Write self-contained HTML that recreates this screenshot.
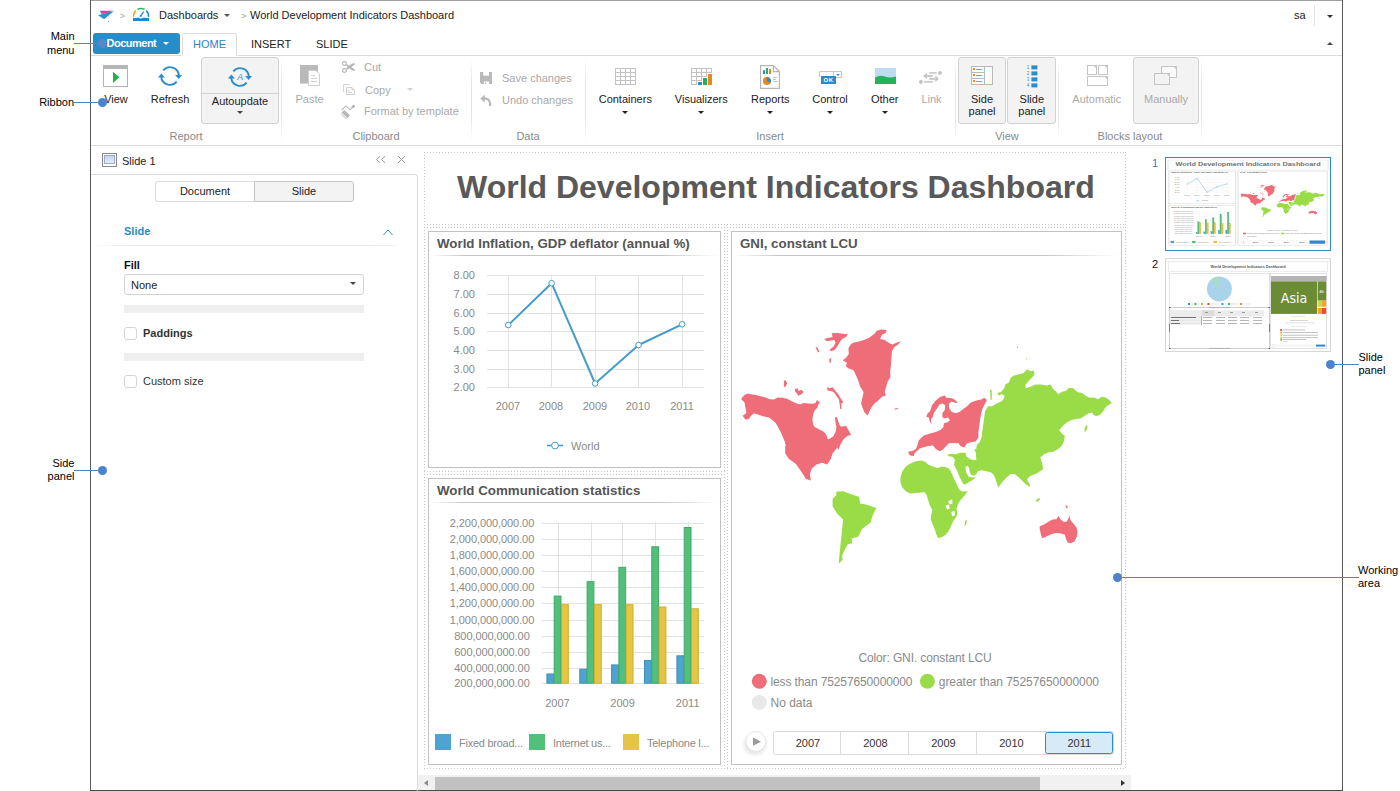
<!DOCTYPE html>
<html><head><meta charset="utf-8"><title>Dashboard</title>
<style>
html,body{margin:0;padding:0;background:#fff;}
body{width:1400px;height:791px;position:relative;overflow:hidden;font-family:"Liberation Sans",Arial,sans-serif;font-size:11px;color:#222;}
.a{position:absolute;white-space:nowrap;}
.c{position:absolute;white-space:nowrap;transform:translateX(-50%);text-align:center;}
.dis{color:#a9a9a9;}
.grp{color:#8a8a8a;}
.sep{position:absolute;width:1px;top:58px;height:84px;background:linear-gradient(#fff,#e4e4e4 30%,#e4e4e4 70%,#fff);}
.btn{position:absolute;background:#f3f3f3;border:1px solid #d2d2d2;border-radius:3px;box-sizing:border-box;}
.arr{position:absolute;width:0;height:0;border-left:3px solid transparent;border-right:3px solid transparent;border-top:3px solid #333;}
.call{position:absolute;font-size:11px;color:#000;line-height:13px;}
.dot{position:absolute;width:9px;height:9px;border-radius:4.5px;background:#4a84cc;}
.ln{position:absolute;height:1px;background:#4a84cc;}
.blk{position:absolute;border:1px solid #c2c2c2;box-sizing:border-box;background:#fff;}
.dots{position:absolute;box-sizing:border-box;background:repeating-linear-gradient(90deg,#c6c6c6 0 1px,transparent 1px 3px) left top/100% 1px no-repeat,repeating-linear-gradient(90deg,#c6c6c6 0 1px,transparent 1px 3px) left bottom/100% 1px no-repeat,repeating-linear-gradient(180deg,#c6c6c6 0 1px,transparent 1px 3px) left top/1px 100% no-repeat,repeating-linear-gradient(180deg,#c6c6c6 0 1px,transparent 1px 3px) right top/1px 100% no-repeat;}
.bt{position:absolute;left:8px;top:4px;font-weight:bold;font-size:13.33px;color:#555;white-space:nowrap;line-height:16px}
.bl{position:absolute;left:2px;right:2px;top:23px;height:1px;background:linear-gradient(90deg,#fff,#c4c4c4 12%,#c4c4c4 80%,#fff);}
.tah{font-family:"DejaVu Sans Condensed","DejaVu Sans",sans-serif;}
</style></head><body>
<!-- FRAME -->
<div class="a" style="left:90px;top:0;width:1253px;height:1px;background:#a0a0a0"></div>
<div class="a" style="left:90px;top:0;width:1px;height:791px;background:#5a5a5a"></div>
<div class="a" style="left:1342px;top:0;width:1px;height:791px;background:#5a5a5a"></div>
<div class="a" style="left:90px;top:790px;width:1253px;height:1px;background:#4a4a4a"></div>
<!--TOP-->
<!-- breadcrumb -->
<svg class="a" style="left:96px;top:8px" width="20" height="16" viewBox="96 8 20 16">
<polygon points="99.8,10.8 112.5,10.8 108,13.2 101.6,13.9" fill="#e8399b"/>
<polygon points="98,15.2 114,10.9 104.1,19.2" fill="#2b8fd0"/>
<rect x="107.9" y="20.9" width="1" height="1" fill="#58a7dc"/>
</svg>
<div class="a" style="left:119.7px;top:11px;color:#a2a2a2;font-size:9px">&gt;</div>
<svg class="a" style="left:131px;top:6px" width="20" height="17" viewBox="131 6 20 17">
<path d="M133.6 16.8 A7.5 7.5 0 0 1 135.9 10.6" fill="none" stroke="#f0a62c" stroke-width="1.5"/>
<path d="M137.4 9.4 A7.5 7.5 0 0 1 144.7 9.4" fill="none" stroke="#2fb457" stroke-width="1.5"/>
<path d="M146.2 10.6 A7.5 7.5 0 0 1 148.5 16.8" fill="none" stroke="#2485c8" stroke-width="1.5"/>
<path d="M143.7 11.6 L140.7 16" stroke="#2485c8" stroke-width="1.3" fill="none"/><circle cx="140.6" cy="16.1" r="1" fill="#2485c8"/>
<path d="M133 18.1 L136.4 18.1 Q137.7 16.9 139 18.1 L141 18.6 L142.8 18.1 Q144.1 16.9 145.4 18.1 L149.1 18.1 L149.1 20.9 L133 20.9 Z" fill="#2485c8"/>
</svg>
<div class="a" style="left:159px;top:9px;">Dashboards</div>
<div class="arr" style="left:224px;top:14px;border-top-color:#555"></div>
<div class="a" style="left:241px;top:11px;color:#a2a2a2;font-size:9px">&gt;</div>
<div class="a" style="left:250px;top:9px;">World Development Indicators Dashboard</div>
<div class="a" style="left:1294px;top:9px;">sa</div>
<div class="a" style="left:1314px;top:5px;width:1px;height:21px;background:#e3e3e3"></div>
<div class="arr" style="left:1327px;top:15px;"></div>
<div class="arr" style="left:1327px;top:42px;border-top:none;border-bottom:3px solid #444"></div>
<!-- tabs -->
<div class="a" style="left:91px;top:55px;width:1251px;height:1px;background:#dcdcdc"></div>
<div class="a" style="left:93px;top:33px;width:87px;height:21px;background:#268cca;border-radius:3px;"></div>
<div class="a" style="left:106.5px;top:37px;color:#fff;font-weight:bold;letter-spacing:-0.5px">Document</div>
<div class="arr" style="left:163px;top:42px;border-top-color:#fff"></div>
<div class="a" style="left:182px;top:33px;width:55px;height:23px;box-sizing:border-box;border:1px solid #dcdcdc;border-bottom:1px solid #fff;background:#fff;border-radius:2px 2px 0 0"></div>
<div class="a" style="left:193px;top:38px;color:#2a84c6;">HOME</div>
<div class="a" style="left:251px;top:38px;">INSERT</div>
<div class="a" style="left:316px;top:38px;">SLIDE</div>
<!--/TOP-->
<!--RIBBON-->
<div class="a" style="left:91px;top:145px;width:1251px;height:1px;background:#dcdcdc"></div>
<div class="sep" style="left:281px"></div>
<div class="sep" style="left:471px"></div>
<div class="sep" style="left:585px"></div>
<div class="sep" style="left:955px"></div>
<div class="sep" style="left:1058px"></div>
<div class="sep" style="left:1201px"></div>
<div class="c grp" style="left:186px;top:130px">Report</div>
<div class="c grp" style="left:376px;top:130px">Clipboard</div>
<div class="c grp" style="left:528px;top:130px">Data</div>
<div class="c grp" style="left:770px;top:130px">Insert</div>
<div class="c grp" style="left:1007px;top:130px">View</div>
<div class="c grp" style="left:1130px;top:130px">Blocks layout</div>
<svg class="a" style="left:103px;top:65px" width="25" height="22" viewBox="0 0 25 22">
<rect x="0.5" y="0.5" width="24" height="21" fill="#fff" stroke="#b4b4b4"/><rect x="0" y="0" width="25" height="4" fill="#b6b6b6"/>
<polygon points="10,6.7 16.4,12.3 10,18" fill="#22b14c"/></svg>
<div class="c " style="left:116px;top:93px">View</div>
<svg class="a" style="left:157px;top:65px" width="26" height="22" viewBox="0 0 26 22"><path d="M6.3 5.3 A8.8 8.8 0 0 1 21.8 10.6" fill="none" stroke="#2b8ccd" stroke-width="1.9"/>
<path d="M19.7 16.7 A8.8 8.8 0 0 1 4.2 11.4" fill="none" stroke="#2b8ccd" stroke-width="1.9"/>
<polygon points="18.1,10.1 25,10.1 21.7,14.1" fill="#2b8ccd"/>
<polygon points="0.9,12.6 7.9,12.6 4.4,8.6" fill="#2b8ccd"/></svg>
<div class="c " style="left:170px;top:93px">Refresh</div>
<div class="btn" style="left:201px;top:57px;width:78px;height:67px"></div>
<div class="a" style="left:202px;top:93px;width:76px;height:1px;background:#d2d2d2"></div>
<svg class="a" style="left:227px;top:66px" width="26" height="22" viewBox="0 0 26 22"><path d="M6.3 5.3 A8.8 8.8 0 0 1 21.8 10.6" fill="none" stroke="#2b8ccd" stroke-width="1.9"/>
<path d="M19.7 16.7 A8.8 8.8 0 0 1 4.2 11.4" fill="none" stroke="#2b8ccd" stroke-width="1.9"/>
<polygon points="18.1,10.1 25,10.1 21.7,14.1" fill="#2b8ccd"/>
<polygon points="0.9,12.6 7.9,12.6 4.4,8.6" fill="#2b8ccd"/><text x="13.2" y="13.6" font-size="8.6" font-style="italic" font-family="Liberation Sans,sans-serif" fill="#2b8ccd" text-anchor="middle">A</text></svg>
<div class="c " style="left:240px;top:95px">Autoupdate</div>
<div class="arr" style="left:237px;top:111px;border-top-color:#444"></div>
<svg class="a" style="left:300px;top:65px" width="21" height="22" viewBox="0 0 21 22">
<rect x="0" y="0" width="18" height="18.6" fill="#b9b9b9"/>
<path d="M8.5 5.5 L16 5.5 L19.5 9 L19.5 20.5 L8.5 20.5 Z" fill="#fff" stroke="#d0d0d0"/>
<path d="M11 10.5h4M11 13.5h6M11 16.5h6" stroke="#d0d0d0" stroke-width="1"/></svg>
<div class="c dis" style="left:309.5px;top:93px">Paste</div>
<svg class="a" style="left:341px;top:61px" width="15" height="13" viewBox="0 0 15 13">
<circle cx="3.5" cy="2.5" r="1.9" fill="none" stroke="#b4b4b4" stroke-width="1.1"/>
<circle cx="3.5" cy="9.5" r="1.9" fill="none" stroke="#b4b4b4" stroke-width="1.1"/>
<polygon points="5,7.4 6,8.7 13.9,3.6 13.4,1.9 10.8,2.8" fill="#b4b4b4"/><polygon points="5,4.6 6,3.3 13.9,8.4 13.4,10.1 10.8,9.2" fill="#b4b4b4"/></svg>
<div class="a dis" style="left:364px;top:61px">Cut</div>
<svg class="a" style="left:343px;top:84px" width="13" height="12" viewBox="0 0 13 12">
<path d="M1.7 7.6 H0.6 V0.6 H6.9" fill="none" stroke="#d2d2d2" stroke-width="1"/>
<path d="M3.6 3.6 H9 L11.4 6 V10.4 H3.6 Z" fill="#fff" stroke="#cdcdcd" stroke-width="1"/><path d="M9 3.6 V6 H11.4" fill="none" stroke="#cdcdcd" stroke-width="0.8"/>
<path d="M5.2 6.5h1.6M5.2 8.5h4" stroke="#cdcdcd"/></svg>
<div class="a dis" style="left:365px;top:84px">Copy</div>
<div class="arr" style="left:407px;top:88px;border-top-color:#d0d0d0"></div>
<svg class="a" style="left:341px;top:104px" width="15" height="16" viewBox="0 0 15 16">
<polygon points="10.4,2.8 12.6,0.6 14.2,2.2 12,4.4" fill="#b0b0b0"/>
<path d="M11.3 3.5 L8.9 5.8 L4.9 1.9 L0.8 6" stroke="#bdbdbd" stroke-width="1.1" fill="none"/>
<polygon points="3.3,5.9 8.9,11.3 6.5,14.2 0.7,8.6" fill="#b8b8b8"/>
<polygon points="0.7,8.6 6.5,14.2 4.6,15.6 -0.1,10.6" fill="#dedede"/></svg>
<div class="a dis" style="left:364px;top:105px">Format by template</div>
<svg class="a" style="left:480px;top:72px" width="12" height="12" viewBox="0 0 12 12">
<path d="M0 0 H12 V12 H1.5 L0 10.5 Z" fill="#b9b9b9"/><rect x="3.2" y="0" width="5.8" height="3.7" fill="#fff"/><rect x="4" y="9.4" width="5" height="2.6" fill="#fff"/><rect x="5" y="10.2" width="1.2" height="1.8" fill="#b9b9b9"/></svg>
<div class="a dis" style="left:502px;top:72px">Save changes</div>
<svg class="a" style="left:480px;top:95px" width="12" height="12" viewBox="0 0 12 12">
<polygon points="0.2,3.6 4.8,-0.4 4.8,7.6" fill="#b9b9b9"/><path d="M4 3.6 H6 Q10.2 4.2 10.2 11" fill="none" stroke="#b9b9b9" stroke-width="2.1"/></svg>
<div class="a dis" style="left:502px;top:94px">Undo changes</div>
<svg class="a" style="left:615px;top:68px" width="21" height="17" viewBox="0 0 21 17"><rect x="0.5" y="0.5" width="20" height="16" fill="#fff" stroke="#c2c2c2"/><path d="M5.5 0V17M10.5 0V17M15.5 0V17M0 4.5H21M0 8.5H21M0 12.5H21" stroke="#c2c2c2" fill="none"/></svg>
<div class="c " style="left:625.3px;top:93px">Containers</div>
<div class="arr" style="left:622px;top:111px;border-top-color:#222"></div>
<svg class="a" style="left:691px;top:68px" width="22" height="17" viewBox="0 0 22 17"><rect x="0.5" y="0.5" width="20" height="16" fill="#fff" stroke="#c2c2c2"/><path d="M5.5 0V17M10.5 0V17M15.5 0V17M0 4.5H21M0 8.5H21M0 12.5H21" stroke="#c2c2c2" fill="none"/><rect x="6" y="13" width="16" height="4" fill="#fff"/><rect x="11" y="9" width="11" height="8" fill="#fff"/><rect x="16" y="5" width="6" height="12" fill="#fff"/><rect x="7" y="14" width="4" height="3" fill="#2b8ccd"/><rect x="12" y="10" width="4" height="7" fill="#27ae60"/><rect x="17" y="6" width="4" height="11" fill="#e8891c"/></svg>
<div class="c " style="left:701.3px;top:93px">Visualizers</div>
<div class="arr" style="left:698px;top:111px;border-top-color:#222"></div>
<svg class="a" style="left:760px;top:64px" width="20" height="25" viewBox="0 0 20 25">
<path d="M0.6 1.6 H13.4 L19.4 7.6 V24.4 H0.6 Z" fill="#fff" stroke="#b6b6b6" stroke-width="1.2"/><path d="M13.4 1.6 V7.6 H19.4" fill="none" stroke="#b6b6b6" stroke-width="1.2"/>
<rect x="3" y="6.2" width="2" height="3.8" fill="#2b8ccd"/><rect x="6" y="4" width="2" height="6" fill="#27ae60"/><rect x="9" y="5" width="2" height="5" fill="#e8891c"/>
<circle cx="6.9" cy="16.9" r="4" fill="#e8891c"/><path d="M6.9 16.9 L6.9 12.9 A4 4 0 0 1 10.4 18.9 Z" fill="#2b8ccd"/>
<path d="M13 13.5h4M13 15.5h3M13 17.5h4.6" stroke="#c4c4c4"/></svg>
<div class="c " style="left:770.3px;top:93px">Reports</div>
<div class="arr" style="left:767px;top:111px;border-top-color:#222"></div>
<svg class="a" style="left:818px;top:70px" width="25" height="15" viewBox="0 0 25 15">
<path d="M1.5 7 V1.5 H23.5 V7.5 H17" fill="#fff" stroke="#c6c6c6"/><path d="M15.5 1.5 V7.5" stroke="#c6c6c6"/>
<polygon points="18.2,4 21.8,4 20,5.9" fill="#2b8ccd"/>
<rect x="3" y="6" width="15" height="8" fill="#2b8ccd"/>
<text x="10.5" y="12.4" font-size="6" font-weight="bold" font-family="Liberation Sans,sans-serif" fill="#fff" text-anchor="middle" letter-spacing="0.4">OK</text></svg>
<div class="c " style="left:830px;top:93px">Control</div>
<div class="arr" style="left:827px;top:111px;border-top-color:#222"></div>
<svg class="a" style="left:875px;top:68px" width="21" height="16" viewBox="0 0 21 16">
<rect width="21" height="16" fill="#bcdcf2"/><path d="M0 9.6 Q5 6.6 10 8.6 T21 8.4 V16 H0 Z" fill="#25b35a"/></svg>
<div class="c " style="left:884.7px;top:93px">Other</div>
<div class="arr" style="left:882px;top:111px;border-top-color:#222"></div>
<svg class="a" style="left:918px;top:70px" width="26" height="15" viewBox="918 70 26 15">
<g fill="#c2c2c2" stroke="none"><circle cx="940" cy="72.9" r="1.9"/><circle cx="920.9" cy="81.9" r="1.9"/>
<rect x="929.3" y="72.2" width="7.4" height="1.5"/><rect x="924.1" y="81.1" width="8.7" height="1.5"/>
<polygon points="923.2,76 926.9,72.8 926.9,79"/><rect x="926.8" y="75.1" width="6" height="1.8"/>
<polygon points="938.9,78.8 935.3,75.6 935.3,82"/><rect x="929.3" y="77.9" width="6.1" height="1.8"/></g></svg>
<div class="c dis" style="left:931.5px;top:93px">Link</div>
<div class="btn" style="left:958px;top:57px;width:48px;height:67px"></div>
<svg class="a" style="left:971px;top:66px" width="22" height="19" viewBox="0 0 22 19">
<rect x="0.5" y="0.5" width="21" height="18" fill="#fff" stroke="#b9b9b9"/><path d="M13.5 0V19M0 6.5H13.5M0 12.5H13.5" stroke="#b9b9b9" fill="none"/>
<rect x="2" y="2" width="2" height="2" fill="#e8891c"/><rect x="5" y="3" width="6" height="1" fill="#e8891c"/>
<rect x="2" y="8" width="2" height="2" fill="#e8891c"/><rect x="5" y="9" width="6" height="1" fill="#e8891c"/>
<rect x="2" y="14" width="2" height="2" fill="#e8891c"/><rect x="5" y="15" width="6" height="1" fill="#e8891c"/></svg>
<div class="c" style="left:982px;top:93px;line-height:12px">Side<br>panel</div>
<div class="btn" style="left:1007px;top:57px;width:49px;height:67px"></div>
<svg class="a" style="left:1026px;top:65px" width="12" height="23" viewBox="0 0 12 23"><rect x="5.4" y="0.4" width="6" height="4" fill="#2b8ccd"/><text x="2" y="4.0" font-size="4.5" font-family="Liberation Sans,sans-serif" fill="#2b8ccd" text-anchor="middle">1</text><rect x="5.4" y="6.4" width="6" height="4" fill="#2b8ccd"/><text x="2" y="10.0" font-size="4.5" font-family="Liberation Sans,sans-serif" fill="#2b8ccd" text-anchor="middle">2</text><rect x="5.4" y="12.4" width="6" height="4" fill="#2b8ccd"/><text x="2" y="16.0" font-size="4.5" font-family="Liberation Sans,sans-serif" fill="#2b8ccd" text-anchor="middle">3</text><rect x="5.4" y="18.4" width="6" height="4" fill="#2b8ccd"/><text x="2" y="22.0" font-size="4.5" font-family="Liberation Sans,sans-serif" fill="#2b8ccd" text-anchor="middle">4</text></svg>
<div class="c" style="left:1031.8px;top:93px;line-height:12px">Slide<br>panel</div>
<svg class="a" style="left:1087px;top:65px" width="22" height="21" viewBox="0 0 22 21">
<rect x="0.5" y="0.5" width="9" height="9" fill="#fff" stroke="#c4c4c4"/><rect x="11.5" y="0.5" width="9" height="9" fill="#fff" stroke="#c4c4c4"/><rect x="0.5" y="11.5" width="20" height="9" fill="#fff" stroke="#c4c4c4"/>
<polygon points="6.5,0.5 9.5,0.5 9.5,3.5" fill="#c4c4c4"/><polygon points="17.5,0.5 20.5,0.5 20.5,3.5" fill="#c4c4c4"/><polygon points="17.5,11.5 20.5,11.5 20.5,14.5" fill="#c4c4c4"/></svg>
<div class="c dis" style="left:1096.8px;top:93px">Automatic</div>
<div class="btn" style="left:1133px;top:57px;width:66px;height:67px"></div>
<svg class="a" style="left:1154px;top:66px" width="24" height="20" viewBox="0 0 24 20">
<path d="M7.5 7 V0.5 H22.5 V11.5 H16" fill="#fafafa" stroke="#c4c4c4"/><polygon points="19.5,0.5 22.5,0.5 22.5,3.5" fill="#c4c4c4"/>
<rect x="0.5" y="7.5" width="15" height="11" fill="#f3f3f3" stroke="#c4c4c4"/><polygon points="12.5,7.5 15.5,7.5 15.5,10.5" fill="#c4c4c4"/></svg>
<div class="c dis" style="left:1166px;top:93px">Manually</div>
<!--/RIBBON-->
<!--SIDE-->
<svg class="a" style="left:102px;top:153px" width="15" height="14" viewBox="0 0 15 14"><defs><linearGradient id="sg" x1="0" y1="0" x2="0" y2="1"><stop offset="0" stop-color="#c3d2ee"/><stop offset="1" stop-color="#e6edf9"/></linearGradient></defs>
<rect x="0.5" y="0.5" width="14" height="13" fill="#fff" stroke="#888"/><rect x="2.5" y="2.5" width="10" height="8" fill="url(#sg)" stroke="#93a3c2" stroke-width="0.9"/></svg>
<div class="a" style="left:122px;top:155px">Slide 1</div>
<svg class="a" style="left:376px;top:156px" width="30" height="8" viewBox="0 0 30 8"><path d="M4 0.2L0.5 3.5L4 6.8M9 0.2L5.5 3.5L9 6.8" fill="none" stroke="#8e8e8e" stroke-width="0.9"/><path d="M22 0L29 7M29 0L22 7" stroke="#8e8e8e" stroke-width="0.9"/></svg>
<div class="a" style="left:91px;top:174px;width:327px;height:700px;box-sizing:border-box;border-top:1px solid #dcdcdc;border-right:1px solid #dcdcdc;border-top-right-radius:4px"></div>
<div class="a" style="left:155px;top:181px;width:100px;height:21px;box-sizing:border-box;border:1px solid #dadada;border-right:none;border-radius:3px 0 0 3px;background:#fff"></div>
<div class="a" style="left:254px;top:181px;width:100px;height:21px;box-sizing:border-box;border:1px solid #c6c6c6;border-radius:0 3px 3px 0;background:#f3f3f3"></div>
<div class="c" style="left:205px;top:185px">Document</div><div class="c" style="left:304px;top:185px">Slide</div>
<div class="a" style="left:124px;top:225px;color:#2a8acb;font-weight:bold">Slide</div>
<svg class="a" style="left:383px;top:229px" width="10" height="7" viewBox="0 0 10 7"><path d="M0.5 6L5 1L9.5 6" fill="none" stroke="#2a8acb" stroke-width="1"/></svg>
<div class="a" style="left:91px;top:245px;width:306px;height:1px;background:linear-gradient(90deg,#fff,#e6e6e6 15%,#e6e6e6 90%,#f4f4f4)"></div>
<div class="a" style="left:124px;top:259px;font-weight:bold;color:#111">Fill</div>
<div class="a" style="left:124px;top:274px;width:240px;height:21px;box-sizing:border-box;border:1px solid #d2d2d2;border-radius:3px;background:#fff"></div>
<div class="a" style="left:131px;top:279px">None</div>
<div class="arr" style="left:350px;top:282px;border-top-color:#444"></div>
<div class="a" style="left:124px;top:305px;width:240px;height:8px;background:#efefef"></div>
<div class="a" style="left:124px;top:327px;width:13px;height:13px;box-sizing:border-box;border:1px solid #d5d5d5;border-radius:3px;background:#fff"></div>
<div class="a" style="left:143px;top:327px;font-weight:bold;color:#333">Paddings</div>
<div class="a" style="left:124px;top:353px;width:240px;height:8px;background:#efefef"></div>
<div class="a" style="left:124px;top:375px;width:13px;height:13px;box-sizing:border-box;border:1px solid #d5d5d5;border-radius:3px;background:#fff"></div>
<div class="a" style="left:143px;top:375px;color:#333">Custom size</div>
<!--/SIDE-->
<!--WORK-->
<div class="dots" style="left:424px;top:152px;width:702px;height:73px"></div>
<div class="dots" style="left:424px;top:227px;width:301px;height:245px"></div>
<div class="dots" style="left:424px;top:474px;width:301px;height:295px"></div>
<div class="dots" style="left:727px;top:227px;width:399px;height:542px"></div>
<div class="a" style="left:457px;top:169px;font-size:32px;font-weight:bold;color:#595959;line-height:37px">World Development Indicators Dashboard</div>
<div class="blk" style="left:428px;top:231px;width:293px;height:237px"><div class="bt">World Inflation, GDP deflator (annual %)</div><div class="bl"></div></div>
<div class="blk" style="left:428px;top:478px;width:293px;height:287px"><div class="bt">World Communication statistics</div><div class="bl"></div></div>
<div class="blk" style="left:731px;top:231px;width:391px;height:534px"><div class="bt">GNI, constant LCU</div><div class="bl"></div></div>
<svg class="a" style="left:0;top:0" width="1400" height="791" viewBox="0 0 1400 791" font-family="Liberation Sans,sans-serif" font-size="11" fill="#8a8a8a">
<path d="M487 275.5H704" stroke="#e2e2e2"/><text x="475" y="279.0" text-anchor="end">8.00</text>
<path d="M487 294.5H704" stroke="#e2e2e2"/><text x="475" y="298.0" text-anchor="end">7.00</text>
<path d="M487 313.5H704" stroke="#e2e2e2"/><text x="475" y="317.0" text-anchor="end">6.00</text>
<path d="M487 331.5H704" stroke="#e2e2e2"/><text x="475" y="335.0" text-anchor="end">5.00</text>
<path d="M487 350.5H704" stroke="#e2e2e2"/><text x="475" y="354.0" text-anchor="end">4.00</text>
<path d="M487 369.5H704" stroke="#e2e2e2"/><text x="475" y="373.0" text-anchor="end">3.00</text>
<path d="M487 387.5H704" stroke="#e2e2e2"/><text x="475" y="391.0" text-anchor="end">2.00</text>
<path d="M508.5 276V387" stroke="#e2e2e2"/><text x="508.0" y="410" text-anchor="middle">2007</text>
<path d="M551.5 276V387" stroke="#e2e2e2"/><text x="551.0" y="410" text-anchor="middle">2008</text>
<path d="M595.5 276V387" stroke="#e2e2e2"/><text x="595.0" y="410" text-anchor="middle">2009</text>
<path d="M638.5 276V387" stroke="#e2e2e2"/><text x="638.0" y="410" text-anchor="middle">2010</text>
<path d="M682.5 276V387" stroke="#e2e2e2"/><text x="682.0" y="410" text-anchor="middle">2011</text>
<polyline points="508.3,325 551.6,283.2 595.1,383.5 638.6,345 682.1,324.3" fill="none" stroke="#459ccb" stroke-width="2" stroke-linejoin="round"/>
<circle cx="508.3" cy="325" r="2.8" fill="#fff" stroke="#459ccb" stroke-width="1"/>
<circle cx="551.6" cy="283.2" r="2.8" fill="#fff" stroke="#459ccb" stroke-width="1"/>
<circle cx="595.1" cy="383.5" r="2.8" fill="#fff" stroke="#459ccb" stroke-width="1"/>
<circle cx="638.6" cy="345" r="2.8" fill="#fff" stroke="#459ccb" stroke-width="1"/>
<circle cx="682.1" cy="324.3" r="2.8" fill="#fff" stroke="#459ccb" stroke-width="1"/>
<path d="M547 445.5H563" stroke="#459ccb" stroke-width="1.6"/><circle cx="555" cy="445.5" r="3.4" fill="#fff" stroke="#459ccb" stroke-width="1"/><text x="571" y="450">World</text>
<path d="M542 523.5H704" stroke="#e2e2e2"/><text x="492" y="526.5" text-anchor="middle" letter-spacing="-0.08">2,200,000,000.00</text>
<path d="M542 539.5H704" stroke="#e2e2e2"/><text x="492" y="542.5" text-anchor="middle" letter-spacing="-0.08">2,000,000,000.00</text>
<path d="M542 555.5H704" stroke="#e2e2e2"/><text x="492" y="558.5" text-anchor="middle" letter-spacing="-0.08">1,800,000,000.00</text>
<path d="M542 571.5H704" stroke="#e2e2e2"/><text x="492" y="574.5" text-anchor="middle" letter-spacing="-0.08">1,600,000,000.00</text>
<path d="M542 587.5H704" stroke="#e2e2e2"/><text x="492" y="590.5" text-anchor="middle" letter-spacing="-0.08">1,400,000,000.00</text>
<path d="M542 603.5H704" stroke="#e2e2e2"/><text x="492" y="606.5" text-anchor="middle" letter-spacing="-0.08">1,200,000,000.00</text>
<path d="M542 620.5H704" stroke="#e2e2e2"/><text x="492" y="623.5" text-anchor="middle" letter-spacing="-0.08">1,000,000,000.00</text>
<path d="M542 636.5H704" stroke="#e2e2e2"/><text x="492" y="639.5" text-anchor="middle" letter-spacing="-0.08">800,000,000.00</text>
<path d="M542 652.5H704" stroke="#e2e2e2"/><text x="492" y="655.5" text-anchor="middle" letter-spacing="-0.08">600,000,000.00</text>
<path d="M542 668.5H704" stroke="#e2e2e2"/><text x="492" y="671.5" text-anchor="middle" letter-spacing="-0.08">400,000,000.00</text>
<path d="M542 683.5H704" stroke="#e2e2e2"/><text x="492" y="686.5" text-anchor="middle" letter-spacing="-0.08">200,000,000.00</text>
<path d="M558.5 522V683" stroke="#e2e2e2"/>
<path d="M591.5 522V683" stroke="#e2e2e2"/>
<path d="M622.5 522V683" stroke="#e2e2e2"/>
<path d="M655.5 522V683" stroke="#e2e2e2"/>
<path d="M688.5 522V683" stroke="#e2e2e2"/>
<rect x="546.9" y="674.0" width="6.8" height="9.2" fill="#4fa3d1" stroke="#3f8fbd" stroke-width="1"/>
<rect x="554.2" y="596.1" width="6.8" height="87.1" fill="#52c07a" stroke="#41a866" stroke-width="1"/>
<rect x="561.5" y="604.7" width="6.8" height="78.5" fill="#e6c545" stroke="#d0ab2c" stroke-width="1"/>
<rect x="579.8" y="669.2" width="6.8" height="14.0" fill="#4fa3d1" stroke="#3f8fbd" stroke-width="1"/>
<rect x="587.1" y="581.7" width="6.8" height="101.5" fill="#52c07a" stroke="#41a866" stroke-width="1"/>
<rect x="594.4" y="604.7" width="6.8" height="78.5" fill="#e6c545" stroke="#d0ab2c" stroke-width="1"/>
<rect x="611.6" y="664.9" width="6.8" height="18.3" fill="#4fa3d1" stroke="#3f8fbd" stroke-width="1"/>
<rect x="618.9" y="567.3" width="6.8" height="115.9" fill="#52c07a" stroke="#41a866" stroke-width="1"/>
<rect x="626.2" y="604.7" width="6.8" height="78.5" fill="#e6c545" stroke="#d0ab2c" stroke-width="1"/>
<rect x="644.5" y="660.4" width="6.8" height="22.8" fill="#4fa3d1" stroke="#3f8fbd" stroke-width="1"/>
<rect x="651.8" y="546.8" width="6.8" height="136.4" fill="#52c07a" stroke="#41a866" stroke-width="1"/>
<rect x="659.1" y="607.0" width="6.8" height="76.2" fill="#e6c545" stroke="#d0ab2c" stroke-width="1"/>
<rect x="676.9" y="655.8" width="6.8" height="27.4" fill="#4fa3d1" stroke="#3f8fbd" stroke-width="1"/>
<rect x="684.2" y="527.5" width="6.8" height="155.7" fill="#52c07a" stroke="#41a866" stroke-width="1"/>
<rect x="691.5" y="608.8" width="6.8" height="74.4" fill="#e6c545" stroke="#d0ab2c" stroke-width="1"/>
<text x="557.5" y="707" text-anchor="middle">2007</text>
<text x="622.6" y="707" text-anchor="middle">2009</text>
<text x="687.7" y="707" text-anchor="middle">2011</text>
<rect x="435" y="734" width="16" height="16" fill="#4fa3d1"/><text x="459" y="747" letter-spacing="-0.25">Fixed broad...</text>
<rect x="529" y="734" width="16" height="16" fill="#52c07a"/><text x="553" y="747" letter-spacing="-0.25">Internet us...</text>
<rect x="623" y="734" width="16" height="16" fill="#e6c545"/><text x="647" y="747" letter-spacing="-0.25">Telephone l...</text>
<g font-size="12"><text x="925" y="662" text-anchor="middle" letter-spacing="-0.12">Color: GNI. constant LCU</text>
<circle cx="759.3" cy="681.3" r="7.5" fill="#ef6d78"/><text x="770.5" y="686" letter-spacing="-0.12">less than 75257650000000</text>
<circle cx="927.4" cy="681.3" r="7.5" fill="#9adb48"/><text x="938.8" y="686" letter-spacing="-0.05">greater than 75257650000000</text>
<circle cx="759.3" cy="702.5" r="7.5" fill="#e8e8e8"/><text x="770.5" y="707">No data</text>
</g>
<defs><radialGradient id="psh"><stop offset="0.55" stop-color="#000" stop-opacity="0.10"/><stop offset="1" stop-color="#000" stop-opacity="0"/></radialGradient></defs><ellipse cx="755" cy="744.5" rx="14" ry="13" fill="url(#psh)"/><circle cx="755.9" cy="741.5" r="10" fill="#fff" stroke="#e6e6e6"/><polygon points="753,737.6 761,741.7 753,745.8" fill="#9a9a9a"/>
<rect x="773.5" y="731.5" width="340" height="23" rx="2" fill="#fff" stroke="#dadada"/>
<path d="M840.5 732V754" stroke="#dadada"/>
<path d="M908.5 732V754" stroke="#dadada"/>
<path d="M976.5 732V754" stroke="#dadada"/>
<rect x="1045.5" y="732.5" width="67" height="21" rx="2" fill="#d6eaf8" stroke="#2b8ccd"/>
<text x="807.9" y="747" text-anchor="middle" font-size="11" fill="#333">2007</text>
<text x="875.5" y="747" text-anchor="middle" font-size="11" fill="#333">2008</text>
<text x="943.5" y="747" text-anchor="middle" font-size="11" fill="#333">2009</text>
<text x="1011.5" y="747" text-anchor="middle" font-size="11" fill="#333">2010</text>
<text x="1079.3" y="747" text-anchor="middle" font-size="11" fill="#333">2011</text>
</svg>
<svg class="a" style="left:0;top:0" width="1400" height="791" viewBox="0 0 1400 791"><path d="M741.6,398.1 744.5,394.9 747.9,393.6 751.1,394.3 755.9,394.9 760.6,396.2 765.3,397.4 770.1,399.3 773.9,399.6 777.7,397.4 782.4,397.7 787.1,398.7 791.9,401.2 796.6,403.4 800.4,404.4 803.3,403.0 808.0,403.4 812.7,403.8 815.6,403.0 816.9,400.0 818.4,401.2 819.9,402.5 818.0,405.3 817.5,407.6 814.6,410.6 813.1,414.8 812.4,419.5 813.1,424.3 814.6,427.1 818.4,429.0 822.6,430.9 825.6,433.8 827.0,436.6 827.9,439.5 830.8,437.9 833.6,436.0 835.5,431.9 836.4,427.1 835.5,422.4 834.9,417.6 837.0,417.1 838.3,421.4 840.2,426.2 843.1,426.6 845.9,425.8 848.4,430.0 851.0,434.7 847.8,436.0 844.6,437.9 842.1,441.4 840.2,445.1 838.3,449.9 837.4,447.6 832.6,453.3 830.8,459.0 827.0,464.6 822.2,462.8 816.5,464.6 811.8,468.4 809.9,474.1 810.8,480.4 806.1,478.9 800.4,470.3 795.7,463.7 789.0,459.0 785.2,453.3 785.2,445.7 785.8,446.1 784.7,441.4 781.5,433.8 778.6,428.1 775.8,423.3 772.9,420.5 769.1,417.6 765.3,416.7 761.5,415.8 757.8,414.4 754.0,413.3 751.1,415.8 748.7,419.0 745.4,419.5 742.6,415.8 746.4,412.9 745.4,407.2 744.5,402.5 741.6,399.6ZM876.3,331.0 881.0,329.5 886.7,329.9 885.7,332.9 881.9,334.8 880.1,339.0 884.8,339.9 888.6,342.8 892.4,344.6 896.2,342.8 900.9,341.2 898.1,344.6 893.9,347.5 892.0,351.3 891.4,357.9 890.9,365.5 890.1,372.1 890.5,376.9 887.6,381.6 886.3,386.4 884.8,391.1 885.7,395.8 881.9,396.8 878.2,400.6 873.4,404.4 870.6,409.1 867.7,415.4 864.9,412.9 863.0,409.1 861.1,403.4 862.4,397.7 863.6,392.1 860.1,386.4 857.9,379.7 855.4,374.0 853.5,370.2 848.8,368.4 845.9,366.5 846.9,362.7 842.7,360.2 845.9,357.9 848.8,354.1 848.4,348.4 850.7,344.6 853.5,342.4 858.2,341.8 863.9,339.9 868.7,338.0 872.5,335.2 875.3,332.9ZM824.1,339.0 827.9,338.0 832.6,337.1 831.7,333.3 837.4,332.9 843.1,333.7 847.8,334.2 845.9,337.1 842.1,339.0 839.3,342.8 837.4,346.5 834.5,350.0 830.8,351.3 829.8,349.4 833.6,346.5 835.5,342.8 834.5,339.9 830.8,340.5 827.0,341.2ZM815.6,347.5 816.9,346.9 819.4,351.3 818.0,352.6ZM829.4,358.9 831.3,357.9 830.8,362.7 829.4,362.7ZM783.9,380.7 785.8,380.3 787.1,383.5 785.2,387.3 783.9,386.4ZM794.7,389.2 797.6,388.3 798.5,391.1 801.4,389.8 803.6,392.1 801.4,394.3 798.5,395.8 796.6,393.0 795.3,391.7ZM827.0,387.3 829.8,388.3 832.6,387.3 835.5,391.1 838.3,393.9 840.2,397.7 842.1,400.6 843.5,402.5 841.2,403.4 841.6,409.1 840.2,409.1 839.7,404.4 838.9,399.6 836.4,395.8 833.6,392.1 830.8,391.1 827.5,390.5ZM894.3,408.7 898.1,407.8 897.7,409.1 894.7,409.7ZM908.3,451.8 913.0,450.8 915.9,448.9 917.8,444.2 918.7,440.4 923.4,435.7 929.1,433.8 935.8,431.9 940.5,430.0 943.4,427.1 943.9,423.3 947.1,422.4 950.0,420.5 948.1,417.6 944.7,418.2 942.4,417.6 942.4,412.9 944.7,410.1 945.2,405.3 942.4,403.4 939.6,404.4 936.7,409.1 933.9,412.9 932.9,416.7 931.0,419.5 931.4,424.3 929.7,421.4 928.8,417.6 926.3,416.7 927.2,413.9 930.1,411.0 932.0,405.3 935.8,400.6 940.5,396.8 944.7,395.5 946.2,397.7 950.9,398.1 954.7,399.6 957.6,402.5 955.3,403.0 951.9,401.5 949.0,403.4 949.0,408.2 951.9,412.0 955.7,413.3 959.5,412.0 963.3,409.1 967.1,406.3 970.8,402.5 976.5,400.6 981.3,399.6 984.1,397.7 987.0,400.0 985.1,403.4 982.6,408.2 981.3,412.9 980.3,418.6 979.4,425.2 978.4,431.9 978.4,437.6 975.6,441.4 970.8,442.3 967.1,443.2 964.2,447.4 960.4,446.1 958.5,443.2 953.8,442.9 949.0,443.2 946.2,446.1 942.4,449.9 939.6,451.2 935.8,448.9 932.9,445.5 928.2,446.1 924.4,447.0 919.6,448.6 917.4,450.8 914.9,452.7 913.6,456.1 910.2,455.6 908.7,453.7ZM1039.7,526.3 1044.0,524.4 1048.8,521.5 1052.6,519.6 1056.4,519.3 1058.6,515.8 1060.5,519.6 1063.9,521.9 1066.8,521.5 1068.7,518.1 1069.2,514.9 1070.6,520.6 1073.4,523.4 1076.3,527.2 1077.6,532.0 1076.8,536.7 1074.4,541.4 1070.6,543.3 1067.7,542.4 1065.8,538.6 1064.9,534.8 1060.1,533.3 1055.4,532.9 1050.7,534.4 1046.9,536.3 1042.1,538.2 1040.8,533.9 1039.7,529.1ZM1065.5,505.4 1067.3,505.4 1067.7,508.3 1066.2,507.9Z" fill="#ef6d78"/><path d="M836.4,491.6 843.1,491.2 850.7,494.0 859.2,496.9 860.1,503.5 865.8,504.5 876.3,507.9 872.5,515.8 870.6,522.5 862.0,529.1 858.2,536.7 851.6,538.6 852.2,543.3 847.8,544.3 844.6,550.0 842.1,555.7 842.7,559.5 839.3,563.6 838.9,561.4 839.7,551.9 841.2,538.6 843.1,519.6 837.4,513.9 832.6,506.4 832.6,498.8 836.4,495.0ZM988.1,406.3 991.9,406.3 996.6,403.4 1001.4,401.5 1003.3,399.6 1004.8,395.8 1001.4,393.9 999.1,395.8 997.2,393.0 1001.0,392.1 1004.2,388.6 1005.2,384.5 1008.9,382.6 1010.8,377.8 1013.7,375.4 1018.4,374.6 1023.7,373.1 1027.0,369.3 1030.8,371.2 1034.0,370.8 1034.5,375.0 1031.7,377.8 1028.9,380.7 1025.6,384.5 1025.6,388.3 1030.8,386.4 1035.5,384.5 1041.2,384.5 1046.9,385.4 1050.7,384.5 1052.6,388.3 1056.4,392.1 1058.2,394.3 1062.0,391.7 1065.8,391.1 1068.7,387.9 1073.4,388.3 1077.2,392.1 1081.9,393.0 1085.7,395.8 1089.5,397.7 1094.3,397.4 1098.1,399.3 1101.9,396.8 1105.6,397.4 1109.4,400.0 1111.7,403.0 1108.5,404.9 1105.6,407.2 1103.8,410.6 1100.0,414.8 1096.2,416.3 1093.3,414.8 1092.4,412.5 1088.6,413.3 1084.8,415.8 1081.0,418.2 1076.3,419.0 1071.5,420.1 1066.8,422.4 1063.0,425.8 1059.2,430.0 1061.7,433.4 1064.9,435.7 1063.9,441.4 1062.0,445.5 1058.2,448.9 1053.5,451.8 1048.8,452.3 1044.0,454.2 1040.2,457.5 1042.1,463.2 1043.1,469.8 1041.2,470.3 1037.4,473.2 1032.6,475.1 1028.9,477.0 1027.0,479.8 1029.8,484.6 1030.2,487.0 1026.0,484.6 1022.2,480.8 1018.4,477.0 1014.6,474.1 1010.8,474.1 1007.1,477.0 1003.3,480.8 1000.4,484.6 998.5,487.4 997.2,484.6 995.7,479.8 993.8,475.1 990.9,472.2 986.2,471.3 981.5,470.3 977.7,471.3 976.3,474.1 973.9,475.8 971.4,475.1 969.7,471.9 969.1,468.1 967.6,465.8 965.3,466.9 966.1,472.2 968.4,476.4 972.0,477.4 976.3,477.4 972.9,479.8 969.1,482.1 965.3,484.6 963.4,484.0 961.5,480.8 959.6,477.0 957.8,472.2 955.9,468.4 954.0,464.6 954.9,459.9 953.0,457.1 948.3,456.1 947.3,454.8 951.1,453.7 955.9,454.2 960.6,452.7 965.3,452.7 966.3,456.5 971.0,459.4 976.3,460.3 975.8,452.7 974.4,448.9 976.3,448.9 976.7,445.1 979.6,442.3 981.5,437.6 982.4,430.0 983.4,423.3 984.3,416.7 985.2,411.0ZM990.0,390.2 991.5,389.2 991.9,394.9 991.5,400.6 990.4,399.6 990.4,394.9ZM1085.7,425.8 1087.6,425.2 1086.7,430.0 1084.8,432.2 1084.4,429.6ZM1016.9,346.2 1018.0,346.2 1018.0,348.1 1016.9,348.1ZM1025.6,358.9 1027.0,357.9 1027.2,359.8ZM1035.5,500.7 1038.9,497.8 1040.2,499.2 1037.4,502.0ZM965.3,520.6 966.9,520.0 966.3,524.4 964.4,526.3ZM910.0,463.7 915.7,461.2 921.4,460.5 925.2,461.8 928.0,464.6 932.7,466.5 937.5,468.1 942.2,466.5 947.0,467.5 949.8,469.4 951.7,473.2 953.6,477.9 956.4,483.6 958.9,489.3 962.1,491.6 967.8,491.2 964.6,495.4 960.8,499.7 958.3,503.5 956.4,508.3 957.4,513.0 956.4,516.8 953.6,520.6 951.3,525.3 949.4,530.1 946.0,534.4 942.2,537.1 938.4,538.2 936.5,534.8 934.6,529.1 932.7,524.4 930.8,519.6 931.2,514.9 932.4,510.2 929.9,505.4 928.0,499.7 926.7,495.0 924.2,492.1 919.5,492.7 914.7,493.1 910.0,493.5 905.8,491.2 902.4,487.4 900.5,482.7 900.5,477.0 902.4,471.3 905.8,466.5Z" fill="#9adb48"/><path d="M947.9,501.6 952.1,499.2 952.6,503.5 949.8,504.5ZM945.6,505.4 948.9,504.5 949.8,508.6 947.0,509.8ZM951.3,511.7 954.5,511.1 954.9,515.5 952.1,516.2Z" fill="#fff"/></svg>
<div class="a" style="left:418px;top:775px;width:713px;height:15px;background:#f1f1f1"></div>
<div class="a" style="left:435px;top:777px;width:605px;height:13px;background:#c1c1c1"></div>
<div class="a" style="left:424px;top:780px;width:0;height:0;border-top:3.5px solid transparent;border-bottom:3.5px solid transparent;border-right:4px solid #8a8a8a"></div>
<div class="a" style="left:1121px;top:780px;width:0;height:0;border-top:3.5px solid transparent;border-bottom:3.5px solid transparent;border-left:4px solid #333"></div>
<!--/WORK-->
<!--SLIDES-->
<div class="a" style="left:1152px;top:157px;color:#2a84c6">1</div>
<div class="a" style="left:1152px;top:258px;color:#111">2</div>
<svg class="a" style="left:0;top:0" width="1400" height="791" viewBox="0 0 1400 791" font-family="Liberation Sans,sans-serif">
<rect x="1165.5" y="157.5" width="165" height="93" fill="#fff" stroke="#2b8ccd"/>
<g transform="translate(1168,160) scale(0.228,0.139) translate(-424,-152)">
<g fill="#fff" stroke="#d8d8d8" stroke-width="3.5"><rect x="424" y="152" width="702" height="72" stroke="#ddd"/><rect x="428" y="232" width="293" height="235"/><rect x="428" y="479" width="293" height="286"/><rect x="731" y="232" width="391" height="533"/></g>
<text x="775" y="198" font-size="32" font-weight="bold" fill="#6e6e6e" text-anchor="middle">World Development Indicators Dashboard</text>
<g font-size="13.3" font-weight="bold" fill="#666"><text x="437" y="248">World Inflation, GDP deflator (annual %)</text><text x="437" y="495">World Communication statistics</text><text x="740" y="248">GNI, constant LCU</text></g>
<g font-size="11" fill="#8a8a8a">
<path d="M487 275.5H704" stroke="#e2e2e2"/><text x="475" y="279.0" text-anchor="end">8.00</text>
<path d="M487 294.5H704" stroke="#e2e2e2"/><text x="475" y="298.0" text-anchor="end">7.00</text>
<path d="M487 313.5H704" stroke="#e2e2e2"/><text x="475" y="317.0" text-anchor="end">6.00</text>
<path d="M487 331.5H704" stroke="#e2e2e2"/><text x="475" y="335.0" text-anchor="end">5.00</text>
<path d="M487 350.5H704" stroke="#e2e2e2"/><text x="475" y="354.0" text-anchor="end">4.00</text>
<path d="M487 369.5H704" stroke="#e2e2e2"/><text x="475" y="373.0" text-anchor="end">3.00</text>
<path d="M487 387.5H704" stroke="#e2e2e2"/><text x="475" y="391.0" text-anchor="end">2.00</text>
<path d="M508.5 276V387" stroke="#e2e2e2"/><text x="508.0" y="410" text-anchor="middle">2007</text>
<path d="M551.5 276V387" stroke="#e2e2e2"/><text x="551.0" y="410" text-anchor="middle">2008</text>
<path d="M595.5 276V387" stroke="#e2e2e2"/><text x="595.0" y="410" text-anchor="middle">2009</text>
<path d="M638.5 276V387" stroke="#e2e2e2"/><text x="638.0" y="410" text-anchor="middle">2010</text>
<path d="M682.5 276V387" stroke="#e2e2e2"/><text x="682.0" y="410" text-anchor="middle">2011</text>
<polyline points="508.3,325 551.6,283.2 595.1,383.5 638.6,345 682.1,324.3" fill="none" stroke="#459ccb" stroke-width="2" stroke-linejoin="round"/>
<circle cx="508.3" cy="325" r="2.8" fill="#fff" stroke="#459ccb" stroke-width="1"/>
<circle cx="551.6" cy="283.2" r="2.8" fill="#fff" stroke="#459ccb" stroke-width="1"/>
<circle cx="595.1" cy="383.5" r="2.8" fill="#fff" stroke="#459ccb" stroke-width="1"/>
<circle cx="638.6" cy="345" r="2.8" fill="#fff" stroke="#459ccb" stroke-width="1"/>
<circle cx="682.1" cy="324.3" r="2.8" fill="#fff" stroke="#459ccb" stroke-width="1"/>
<path d="M547 445.5H563" stroke="#459ccb" stroke-width="1.6"/><circle cx="555" cy="445.5" r="3.4" fill="#fff" stroke="#459ccb" stroke-width="1"/><text x="571" y="450">World</text>
<path d="M542 523.5H704" stroke="#e2e2e2"/><text x="492" y="526.5" text-anchor="middle" letter-spacing="-0.08">2,200,000,000.00</text>
<path d="M542 539.5H704" stroke="#e2e2e2"/><text x="492" y="542.5" text-anchor="middle" letter-spacing="-0.08">2,000,000,000.00</text>
<path d="M542 555.5H704" stroke="#e2e2e2"/><text x="492" y="558.5" text-anchor="middle" letter-spacing="-0.08">1,800,000,000.00</text>
<path d="M542 571.5H704" stroke="#e2e2e2"/><text x="492" y="574.5" text-anchor="middle" letter-spacing="-0.08">1,600,000,000.00</text>
<path d="M542 587.5H704" stroke="#e2e2e2"/><text x="492" y="590.5" text-anchor="middle" letter-spacing="-0.08">1,400,000,000.00</text>
<path d="M542 603.5H704" stroke="#e2e2e2"/><text x="492" y="606.5" text-anchor="middle" letter-spacing="-0.08">1,200,000,000.00</text>
<path d="M542 620.5H704" stroke="#e2e2e2"/><text x="492" y="623.5" text-anchor="middle" letter-spacing="-0.08">1,000,000,000.00</text>
<path d="M542 636.5H704" stroke="#e2e2e2"/><text x="492" y="639.5" text-anchor="middle" letter-spacing="-0.08">800,000,000.00</text>
<path d="M542 652.5H704" stroke="#e2e2e2"/><text x="492" y="655.5" text-anchor="middle" letter-spacing="-0.08">600,000,000.00</text>
<path d="M542 668.5H704" stroke="#e2e2e2"/><text x="492" y="671.5" text-anchor="middle" letter-spacing="-0.08">400,000,000.00</text>
<path d="M542 683.5H704" stroke="#e2e2e2"/><text x="492" y="686.5" text-anchor="middle" letter-spacing="-0.08">200,000,000.00</text>
<path d="M558.5 522V683" stroke="#e2e2e2"/>
<path d="M591.5 522V683" stroke="#e2e2e2"/>
<path d="M622.5 522V683" stroke="#e2e2e2"/>
<path d="M655.5 522V683" stroke="#e2e2e2"/>
<path d="M688.5 522V683" stroke="#e2e2e2"/>
<rect x="546.9" y="674.0" width="6.8" height="9.2" fill="#4fa3d1" stroke="#3f8fbd" stroke-width="1"/>
<rect x="554.2" y="596.1" width="6.8" height="87.1" fill="#52c07a" stroke="#41a866" stroke-width="1"/>
<rect x="561.5" y="604.7" width="6.8" height="78.5" fill="#e6c545" stroke="#d0ab2c" stroke-width="1"/>
<rect x="579.8" y="669.2" width="6.8" height="14.0" fill="#4fa3d1" stroke="#3f8fbd" stroke-width="1"/>
<rect x="587.1" y="581.7" width="6.8" height="101.5" fill="#52c07a" stroke="#41a866" stroke-width="1"/>
<rect x="594.4" y="604.7" width="6.8" height="78.5" fill="#e6c545" stroke="#d0ab2c" stroke-width="1"/>
<rect x="611.6" y="664.9" width="6.8" height="18.3" fill="#4fa3d1" stroke="#3f8fbd" stroke-width="1"/>
<rect x="618.9" y="567.3" width="6.8" height="115.9" fill="#52c07a" stroke="#41a866" stroke-width="1"/>
<rect x="626.2" y="604.7" width="6.8" height="78.5" fill="#e6c545" stroke="#d0ab2c" stroke-width="1"/>
<rect x="644.5" y="660.4" width="6.8" height="22.8" fill="#4fa3d1" stroke="#3f8fbd" stroke-width="1"/>
<rect x="651.8" y="546.8" width="6.8" height="136.4" fill="#52c07a" stroke="#41a866" stroke-width="1"/>
<rect x="659.1" y="607.0" width="6.8" height="76.2" fill="#e6c545" stroke="#d0ab2c" stroke-width="1"/>
<rect x="676.9" y="655.8" width="6.8" height="27.4" fill="#4fa3d1" stroke="#3f8fbd" stroke-width="1"/>
<rect x="684.2" y="527.5" width="6.8" height="155.7" fill="#52c07a" stroke="#41a866" stroke-width="1"/>
<rect x="691.5" y="608.8" width="6.8" height="74.4" fill="#e6c545" stroke="#d0ab2c" stroke-width="1"/>
<text x="557.5" y="707" text-anchor="middle">2007</text>
<text x="622.6" y="707" text-anchor="middle">2009</text>
<text x="687.7" y="707" text-anchor="middle">2011</text>
<rect x="435" y="734" width="16" height="16" fill="#4fa3d1"/><text x="459" y="747" letter-spacing="-0.25">Fixed broad...</text>
<rect x="529" y="734" width="16" height="16" fill="#52c07a"/><text x="553" y="747" letter-spacing="-0.25">Internet us...</text>
<rect x="623" y="734" width="16" height="16" fill="#e6c545"/><text x="647" y="747" letter-spacing="-0.25">Telephone l...</text>
<g font-size="12"><text x="925" y="662" text-anchor="middle" letter-spacing="-0.12">Color: GNI. constant LCU</text>
<circle cx="759.3" cy="681.3" r="7.5" fill="#ef6d78"/><text x="770.5" y="686" letter-spacing="-0.12">less than 75257650000000</text>
<circle cx="927.4" cy="681.3" r="7.5" fill="#9adb48"/><text x="938.8" y="686" letter-spacing="-0.05">greater than 75257650000000</text>
<circle cx="759.3" cy="702.5" r="7.5" fill="#e8e8e8"/><text x="770.5" y="707">No data</text>
</g>
<ellipse cx="755" cy="744.5" rx="14" ry="13" fill="url(#psh)"/><circle cx="755.9" cy="741.5" r="10" fill="#fff" stroke="#e6e6e6"/><polygon points="753,737.6 761,741.7 753,745.8" fill="#9a9a9a"/>
<rect x="773.5" y="731.5" width="340" height="23" rx="2" fill="#fff" stroke="#dadada"/>
<path d="M840.5 732V754" stroke="#dadada"/>
<path d="M908.5 732V754" stroke="#dadada"/>
<path d="M976.5 732V754" stroke="#dadada"/>
<rect x="1045.5" y="732.5" width="67" height="21" rx="2" fill="#d6eaf8" stroke="#2b8ccd"/>
<text x="807.9" y="747" text-anchor="middle" font-size="11" fill="#333">2007</text>
<text x="875.5" y="747" text-anchor="middle" font-size="11" fill="#333">2008</text>
<text x="943.5" y="747" text-anchor="middle" font-size="11" fill="#333">2009</text>
<text x="1011.5" y="747" text-anchor="middle" font-size="11" fill="#333">2010</text>
<text x="1079.3" y="747" text-anchor="middle" font-size="11" fill="#333">2011</text>
</g>
<path d="M741.6,398.1 744.5,394.9 747.9,393.6 751.1,394.3 755.9,394.9 760.6,396.2 765.3,397.4 770.1,399.3 773.9,399.6 777.7,397.4 782.4,397.7 787.1,398.7 791.9,401.2 796.6,403.4 800.4,404.4 803.3,403.0 808.0,403.4 812.7,403.8 815.6,403.0 816.9,400.0 818.4,401.2 819.9,402.5 818.0,405.3 817.5,407.6 814.6,410.6 813.1,414.8 812.4,419.5 813.1,424.3 814.6,427.1 818.4,429.0 822.6,430.9 825.6,433.8 827.0,436.6 827.9,439.5 830.8,437.9 833.6,436.0 835.5,431.9 836.4,427.1 835.5,422.4 834.9,417.6 837.0,417.1 838.3,421.4 840.2,426.2 843.1,426.6 845.9,425.8 848.4,430.0 851.0,434.7 847.8,436.0 844.6,437.9 842.1,441.4 840.2,445.1 838.3,449.9 837.4,447.6 832.6,453.3 830.8,459.0 827.0,464.6 822.2,462.8 816.5,464.6 811.8,468.4 809.9,474.1 810.8,480.4 806.1,478.9 800.4,470.3 795.7,463.7 789.0,459.0 785.2,453.3 785.2,445.7 785.8,446.1 784.7,441.4 781.5,433.8 778.6,428.1 775.8,423.3 772.9,420.5 769.1,417.6 765.3,416.7 761.5,415.8 757.8,414.4 754.0,413.3 751.1,415.8 748.7,419.0 745.4,419.5 742.6,415.8 746.4,412.9 745.4,407.2 744.5,402.5 741.6,399.6ZM876.3,331.0 881.0,329.5 886.7,329.9 885.7,332.9 881.9,334.8 880.1,339.0 884.8,339.9 888.6,342.8 892.4,344.6 896.2,342.8 900.9,341.2 898.1,344.6 893.9,347.5 892.0,351.3 891.4,357.9 890.9,365.5 890.1,372.1 890.5,376.9 887.6,381.6 886.3,386.4 884.8,391.1 885.7,395.8 881.9,396.8 878.2,400.6 873.4,404.4 870.6,409.1 867.7,415.4 864.9,412.9 863.0,409.1 861.1,403.4 862.4,397.7 863.6,392.1 860.1,386.4 857.9,379.7 855.4,374.0 853.5,370.2 848.8,368.4 845.9,366.5 846.9,362.7 842.7,360.2 845.9,357.9 848.8,354.1 848.4,348.4 850.7,344.6 853.5,342.4 858.2,341.8 863.9,339.9 868.7,338.0 872.5,335.2 875.3,332.9ZM824.1,339.0 827.9,338.0 832.6,337.1 831.7,333.3 837.4,332.9 843.1,333.7 847.8,334.2 845.9,337.1 842.1,339.0 839.3,342.8 837.4,346.5 834.5,350.0 830.8,351.3 829.8,349.4 833.6,346.5 835.5,342.8 834.5,339.9 830.8,340.5 827.0,341.2ZM815.6,347.5 816.9,346.9 819.4,351.3 818.0,352.6ZM829.4,358.9 831.3,357.9 830.8,362.7 829.4,362.7ZM783.9,380.7 785.8,380.3 787.1,383.5 785.2,387.3 783.9,386.4ZM794.7,389.2 797.6,388.3 798.5,391.1 801.4,389.8 803.6,392.1 801.4,394.3 798.5,395.8 796.6,393.0 795.3,391.7ZM827.0,387.3 829.8,388.3 832.6,387.3 835.5,391.1 838.3,393.9 840.2,397.7 842.1,400.6 843.5,402.5 841.2,403.4 841.6,409.1 840.2,409.1 839.7,404.4 838.9,399.6 836.4,395.8 833.6,392.1 830.8,391.1 827.5,390.5ZM894.3,408.7 898.1,407.8 897.7,409.1 894.7,409.7ZM908.3,451.8 913.0,450.8 915.9,448.9 917.8,444.2 918.7,440.4 923.4,435.7 929.1,433.8 935.8,431.9 940.5,430.0 943.4,427.1 943.9,423.3 947.1,422.4 950.0,420.5 948.1,417.6 944.7,418.2 942.4,417.6 942.4,412.9 944.7,410.1 945.2,405.3 942.4,403.4 939.6,404.4 936.7,409.1 933.9,412.9 932.9,416.7 931.0,419.5 931.4,424.3 929.7,421.4 928.8,417.6 926.3,416.7 927.2,413.9 930.1,411.0 932.0,405.3 935.8,400.6 940.5,396.8 944.7,395.5 946.2,397.7 950.9,398.1 954.7,399.6 957.6,402.5 955.3,403.0 951.9,401.5 949.0,403.4 949.0,408.2 951.9,412.0 955.7,413.3 959.5,412.0 963.3,409.1 967.1,406.3 970.8,402.5 976.5,400.6 981.3,399.6 984.1,397.7 987.0,400.0 985.1,403.4 982.6,408.2 981.3,412.9 980.3,418.6 979.4,425.2 978.4,431.9 978.4,437.6 975.6,441.4 970.8,442.3 967.1,443.2 964.2,447.4 960.4,446.1 958.5,443.2 953.8,442.9 949.0,443.2 946.2,446.1 942.4,449.9 939.6,451.2 935.8,448.9 932.9,445.5 928.2,446.1 924.4,447.0 919.6,448.6 917.4,450.8 914.9,452.7 913.6,456.1 910.2,455.6 908.7,453.7ZM1039.7,526.3 1044.0,524.4 1048.8,521.5 1052.6,519.6 1056.4,519.3 1058.6,515.8 1060.5,519.6 1063.9,521.9 1066.8,521.5 1068.7,518.1 1069.2,514.9 1070.6,520.6 1073.4,523.4 1076.3,527.2 1077.6,532.0 1076.8,536.7 1074.4,541.4 1070.6,543.3 1067.7,542.4 1065.8,538.6 1064.9,534.8 1060.1,533.3 1055.4,532.9 1050.7,534.4 1046.9,536.3 1042.1,538.2 1040.8,533.9 1039.7,529.1ZM1065.5,505.4 1067.3,505.4 1067.7,508.3 1066.2,507.9Z" fill="#ef6d78"/><path d="M836.4,491.6 843.1,491.2 850.7,494.0 859.2,496.9 860.1,503.5 865.8,504.5 876.3,507.9 872.5,515.8 870.6,522.5 862.0,529.1 858.2,536.7 851.6,538.6 852.2,543.3 847.8,544.3 844.6,550.0 842.1,555.7 842.7,559.5 839.3,563.6 838.9,561.4 839.7,551.9 841.2,538.6 843.1,519.6 837.4,513.9 832.6,506.4 832.6,498.8 836.4,495.0ZM988.1,406.3 991.9,406.3 996.6,403.4 1001.4,401.5 1003.3,399.6 1004.8,395.8 1001.4,393.9 999.1,395.8 997.2,393.0 1001.0,392.1 1004.2,388.6 1005.2,384.5 1008.9,382.6 1010.8,377.8 1013.7,375.4 1018.4,374.6 1023.7,373.1 1027.0,369.3 1030.8,371.2 1034.0,370.8 1034.5,375.0 1031.7,377.8 1028.9,380.7 1025.6,384.5 1025.6,388.3 1030.8,386.4 1035.5,384.5 1041.2,384.5 1046.9,385.4 1050.7,384.5 1052.6,388.3 1056.4,392.1 1058.2,394.3 1062.0,391.7 1065.8,391.1 1068.7,387.9 1073.4,388.3 1077.2,392.1 1081.9,393.0 1085.7,395.8 1089.5,397.7 1094.3,397.4 1098.1,399.3 1101.9,396.8 1105.6,397.4 1109.4,400.0 1111.7,403.0 1108.5,404.9 1105.6,407.2 1103.8,410.6 1100.0,414.8 1096.2,416.3 1093.3,414.8 1092.4,412.5 1088.6,413.3 1084.8,415.8 1081.0,418.2 1076.3,419.0 1071.5,420.1 1066.8,422.4 1063.0,425.8 1059.2,430.0 1061.7,433.4 1064.9,435.7 1063.9,441.4 1062.0,445.5 1058.2,448.9 1053.5,451.8 1048.8,452.3 1044.0,454.2 1040.2,457.5 1042.1,463.2 1043.1,469.8 1041.2,470.3 1037.4,473.2 1032.6,475.1 1028.9,477.0 1027.0,479.8 1029.8,484.6 1030.2,487.0 1026.0,484.6 1022.2,480.8 1018.4,477.0 1014.6,474.1 1010.8,474.1 1007.1,477.0 1003.3,480.8 1000.4,484.6 998.5,487.4 997.2,484.6 995.7,479.8 993.8,475.1 990.9,472.2 986.2,471.3 981.5,470.3 977.7,471.3 976.3,474.1 973.9,475.8 971.4,475.1 969.7,471.9 969.1,468.1 967.6,465.8 965.3,466.9 966.1,472.2 968.4,476.4 972.0,477.4 976.3,477.4 972.9,479.8 969.1,482.1 965.3,484.6 963.4,484.0 961.5,480.8 959.6,477.0 957.8,472.2 955.9,468.4 954.0,464.6 954.9,459.9 953.0,457.1 948.3,456.1 947.3,454.8 951.1,453.7 955.9,454.2 960.6,452.7 965.3,452.7 966.3,456.5 971.0,459.4 976.3,460.3 975.8,452.7 974.4,448.9 976.3,448.9 976.7,445.1 979.6,442.3 981.5,437.6 982.4,430.0 983.4,423.3 984.3,416.7 985.2,411.0ZM990.0,390.2 991.5,389.2 991.9,394.9 991.5,400.6 990.4,399.6 990.4,394.9ZM1085.7,425.8 1087.6,425.2 1086.7,430.0 1084.8,432.2 1084.4,429.6ZM1016.9,346.2 1018.0,346.2 1018.0,348.1 1016.9,348.1ZM1025.6,358.9 1027.0,357.9 1027.2,359.8ZM1035.5,500.7 1038.9,497.8 1040.2,499.2 1037.4,502.0ZM965.3,520.6 966.9,520.0 966.3,524.4 964.4,526.3ZM910.0,463.7 915.7,461.2 921.4,460.5 925.2,461.8 928.0,464.6 932.7,466.5 937.5,468.1 942.2,466.5 947.0,467.5 949.8,469.4 951.7,473.2 953.6,477.9 956.4,483.6 958.9,489.3 962.1,491.6 967.8,491.2 964.6,495.4 960.8,499.7 958.3,503.5 956.4,508.3 957.4,513.0 956.4,516.8 953.6,520.6 951.3,525.3 949.4,530.1 946.0,534.4 942.2,537.1 938.4,538.2 936.5,534.8 934.6,529.1 932.7,524.4 930.8,519.6 931.2,514.9 932.4,510.2 929.9,505.4 928.0,499.7 926.7,495.0 924.2,492.1 919.5,492.7 914.7,493.1 910.0,493.5 905.8,491.2 902.4,487.4 900.5,482.7 900.5,477.0 902.4,471.3 905.8,466.5Z" fill="#9adb48"/><path d="M947.9,501.6 952.1,499.2 952.6,503.5 949.8,504.5ZM945.6,505.4 948.9,504.5 949.8,508.6 947.0,509.8ZM951.3,511.7 954.5,511.1 954.9,515.5 952.1,516.2Z" fill="#fff"/><rect x="1045" y="732" width="68" height="22" fill="#2b8ccd"/></g>
<rect x="1165.5" y="258.5" width="165" height="93" fill="#fff" stroke="#d6d6d6"/>
<rect x="1168.5" y="261.5" width="159" height="10" fill="#fff" stroke="#ececec"/>
<text x="1248" y="268" font-size="4" font-weight="bold" fill="#555" text-anchor="middle" textLength="75" lengthAdjust="spacingAndGlyphs">World Development Indicators Dashboard</text>
<rect x="1169.5" y="273.5" width="100" height="34" fill="#fff" stroke="#e4e4e4"/>
<circle cx="1219.4" cy="288.9" r="12.5" fill="#a8d3ea"/><path d="M1219.4 288.9 L1211.2 279.5 A12.5 12.5 0 0 1 1219.4 276.4 Z" fill="#a6dcc8"/>
<rect x="1188" y="303" width="2" height="2" fill="#2b8ccd"/><rect x="1191" y="303.7" width="3" height="0.6" fill="#d0d0d0"/><rect x="1194.5" y="303" width="2" height="2" fill="#3bb55e"/><rect x="1197.5" y="303.7" width="3" height="0.6" fill="#d0d0d0"/><rect x="1201" y="303" width="2" height="2" fill="#e8b820"/><rect x="1204" y="303.7" width="3" height="0.6" fill="#d0d0d0"/><rect x="1207.5" y="303" width="2" height="2" fill="#f04040"/><rect x="1210.5" y="303.7" width="8" height="0.6" fill="#d0d0d0"/><rect x="1221.5" y="303" width="2" height="2" fill="#2b9ce0"/><rect x="1224.5" y="303.7" width="8" height="0.6" fill="#d0d0d0"/><rect x="1228" y="303" width="2" height="2" fill="#3bb58e"/><rect x="1231" y="303.7" width="8" height="0.6" fill="#d0d0d0"/><rect x="1240" y="303" width="2" height="2" fill="#e88a2c"/><rect x="1243" y="303.7" width="8" height="0.6" fill="#d0d0d0"/>
<rect x="1169.5" y="307.5" width="100" height="41" fill="#fff" stroke="#dcdcdc"/>
<rect x="1169.5" y="307.5" width="100" height="41" fill="none" stroke="#c9c9c9" stroke-width="0.7"/><path d="M1169.5 324V332M1269.5 324V332" stroke="#777" stroke-width="0.9"/><path d="M1209 307.6H1230M1209 348.4H1230" stroke="#aaa" stroke-width="0.8"/><path d="M1169 307.5h1.4M1268.6 307.5h1.4M1169 348.5h1.4M1268.6 348.5h1.4" stroke="#555" stroke-width="1"/><path d="M1201.5 310V325" stroke="#777" stroke-width="0.6"/>
<rect x="1170" y="310.3" width="94" height="6" fill="#ececec"/><rect x="1202" y="310.3" width="12" height="6" fill="#dcdcdc"/>
<rect x="1170" y="316.3" width="31" height="2.2" fill="#e6e6e6"/><rect x="1171" y="317.1" width="25" height="0.8" fill="#555"/><rect x="1203" y="317.2" width="9" height="0.7" fill="#999"/><rect x="1216" y="317.2" width="9" height="0.7" fill="#999"/><rect x="1228" y="317.2" width="9" height="0.7" fill="#999"/><rect x="1240" y="317.2" width="9" height="0.7" fill="#999"/><rect x="1253" y="317.2" width="9" height="0.7" fill="#999"/><rect x="1170" y="319.3" width="31" height="2.2" fill="#e6e6e6"/><rect x="1171" y="320.1" width="8" height="0.8" fill="#555"/><rect x="1203" y="320.2" width="9" height="0.7" fill="#999"/><rect x="1216" y="320.2" width="9" height="0.7" fill="#999"/><rect x="1228" y="320.2" width="9" height="0.7" fill="#999"/><rect x="1240" y="320.2" width="9" height="0.7" fill="#999"/><rect x="1253" y="320.2" width="9" height="0.7" fill="#999"/><rect x="1170" y="322.3" width="31" height="2.2" fill="#e6e6e6"/><rect x="1171" y="323.1" width="9" height="0.8" fill="#555"/><rect x="1203" y="323.2" width="9" height="0.7" fill="#999"/><rect x="1216" y="323.2" width="9" height="0.7" fill="#999"/><rect x="1228" y="323.2" width="9" height="0.7" fill="#999"/><rect x="1240" y="323.2" width="9" height="0.7" fill="#999"/><rect x="1253" y="323.2" width="9" height="0.7" fill="#999"/><rect x="1205" y="312" width="3" height="0.8" fill="#888"/><rect x="1218" y="312" width="3" height="0.8" fill="#888"/><rect x="1230" y="312" width="3" height="0.8" fill="#888"/><rect x="1242" y="312" width="3" height="0.8" fill="#888"/><rect x="1255" y="312" width="3" height="0.8" fill="#888"/>
<rect x="1270.5" y="273.5" width="56" height="75" fill="#fff" stroke="#e0e0e0"/>
<rect x="1271" y="276" width="55.5" height="5" fill="#b4b4b4"/>
<rect x="1271" y="281.3" width="46" height="32.6" fill="#6b8b34"/><rect x="1317.6" y="281.3" width="8.6" height="19.3" fill="#6b8b34"/>
<rect x="1317.6" y="300.6" width="4.4" height="6.1" fill="#c9d845"/><rect x="1322" y="300.6" width="4.2" height="6.1" fill="#eda531"/><rect x="1317.6" y="308" width="4.4" height="5.9" fill="#eda531"/><rect x="1322" y="308" width="4.2" height="5.9" fill="#f04a30"/>
<text x="1294" y="303.2" font-size="13.5" fill="#fff" text-anchor="middle" font-family="DejaVu Sans Condensed,DejaVu Sans,sans-serif" textLength="26.5" lengthAdjust="spacingAndGlyphs">Asia</text>
<text x="1321.8" y="293" font-size="3.6" fill="#fff" text-anchor="middle">Afr</text>
<rect x="1291" y="316" width="14" height="0.7" fill="#ddd"/><rect x="1290" y="320" width="18" height="0.8" fill="#ccc"/><rect x="1285" y="322.6" width="30" height="0.6" fill="#ccc"/><rect x="1291" y="326" width="16" height="0.6" fill="#ddd"/>
<rect x="1280.3" y="329" width="1.8" height="2" fill="#f04a30"/><rect x="1283" y="329.6" width="22" height="0.7" fill="#aaa"/><rect x="1280.3" y="331.6" width="1.8" height="2" fill="#eda531"/><rect x="1283" y="332.20000000000005" width="35" height="0.7" fill="#aaa"/><rect x="1280.3" y="334.2" width="1.8" height="2" fill="#ecd83a"/><rect x="1283" y="334.8" width="35" height="0.7" fill="#aaa"/><rect x="1280.3" y="336.8" width="1.8" height="2" fill="#c9d845"/><rect x="1283" y="337.40000000000003" width="35" height="0.7" fill="#aaa"/><rect x="1280.3" y="338.6" width="1.8" height="2" fill="#8fc04a"/><rect x="1283" y="339.20000000000005" width="23" height="0.7" fill="#aaa"/><rect x="1283" y="341.5" width="5" height="0.6" fill="#bbb"/>
<circle cx="1273.8" cy="345.6" r="1.5" fill="#fff" stroke="#ccc" stroke-width="0.4"/><rect x="1276" y="344.6" width="40" height="2" fill="#f4f4f4"/><rect x="1316" y="344.6" width="9.3" height="2" fill="#2b8ccd"/>
</svg>
<!--/SLIDES-->
<!--CALLOUTS-->
<div class="call" style="line-height:14px;right:1325.5px;text-align:right;top:29px">Main<br>menu</div>
<div class="ln" style="left:74px;top:43px;width:24px"></div>
<div class="dot" style="left:98px;top:39px;background:#5886c9"></div>
<div class="call" style="right:1326px;text-align:right;top:96px">Ribbon</div>
<div class="ln" style="left:74px;top:102px;width:24px"></div>
<div class="dot" style="left:98px;top:98px;background:#4a84cc"></div>
<div class="call" style="right:1325.5px;text-align:right;top:457px">Side<br>panel</div>
<div class="ln" style="left:74px;top:470px;width:24px"></div>
<div class="dot" style="left:98px;top:466px;background:#4a84cc"></div>
<div class="call" style="left:1358.5px;top:351px">Slide<br>panel</div>
<div class="ln" style="left:1335px;top:364px;width:24px"></div>
<div class="dot" style="left:1326px;top:360px;background:#4a84cc"></div>
<div class="call" style="left:1358px;top:564px">Working<br>area</div>
<div class="ln" style="left:1122px;top:577px;width:237px"></div>
<div class="dot" style="left:1113px;top:573px;background:#4a84cc"></div>
<!--/CALLOUTS-->
</body></html>
